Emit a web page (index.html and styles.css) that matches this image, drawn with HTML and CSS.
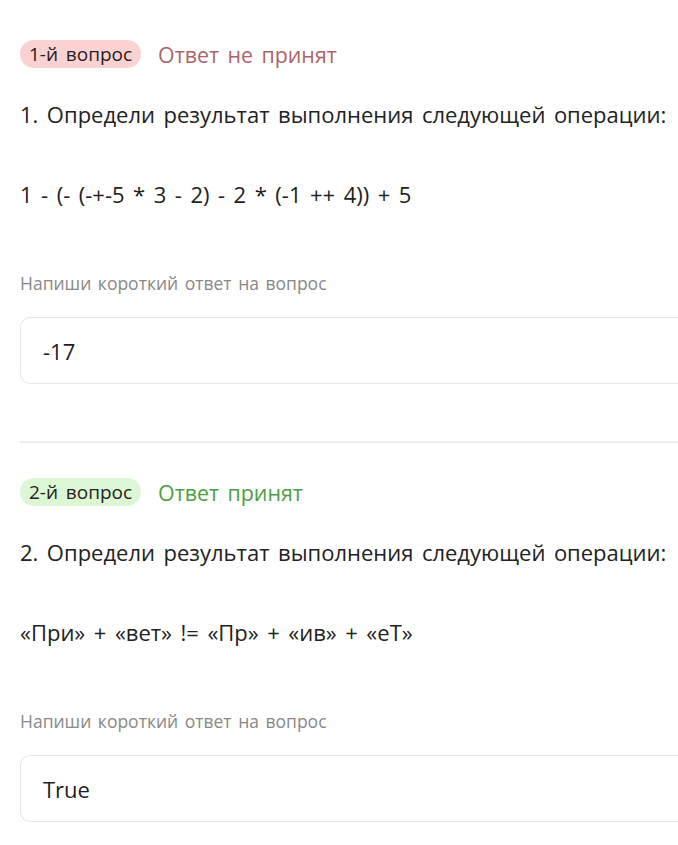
FILE: index.html
```html
<!DOCTYPE html>
<html lang="ru">
<head>
<meta charset="utf-8">
<link rel="stylesheet" href="styles.css">
</head>
<body>
<main class="page">
  <section class="question">
    <div class="q-head">
      <span class="badge badge-wrong">1-й вопрос</span>
      <span class="status status-wrong">Ответ не принят</span>
    </div>
    <p class="q-text">1. Определи результат выполнения следующей операции:</p>
    <p class="q-expr">1 - (- (-+-5 * 3 - 2) - 2 * (-1 ++ 4)) + 5</p>
    <p class="q-label">Напиши короткий ответ на вопрос</p>
    <div class="answer">-17</div>
  </section>
  <hr class="divider">
  <section class="question">
    <div class="q-head">
      <span class="badge badge-right">2-й вопрос</span>
      <span class="status status-right">Ответ принят</span>
    </div>
    <p class="q-text">2. Определи результат выполнения следующей операции:</p>
    <p class="q-expr">«При» + «вет» != «Пр» + «ив» + «еТ»</p>
    <p class="q-label">Напиши короткий ответ на вопрос</p>
    <div class="answer">True</div>
  </section>
</main>
</body>
</html>
```

FILE: styles.css
```css
html, body {
  margin: 0;
  padding: 0;
  background: #ffffff;
  overflow: hidden;
}
body {
  font-family: "Open Sans", "Noto Sans", sans-serif;
  color: #222222;
}
.page {
  padding: 40px 0 0 20px;
}
.question {
  display: flex;
  flex-direction: column;
}
.q-head {
  display: flex;
  align-items: center;
  gap: 17px;
  height: 28px;
}
.badge {
  display: inline-flex;
  align-items: center;
  height: 28px;
  padding: 0 9px;
  border-radius: 14px;
  font-size: 19px;
  word-spacing: 2.8px;
  color: #262020;
}
.badge-wrong { background: #fbd2d2; }
.badge-right { background: #dcf7d3; }
.status {
  font-size: 21.4px;
  word-spacing: 2.8px;
}
.status-wrong { color: #ad6468; }
.status-right { color: #4b9e44; }
.q-text, .q-expr {
  margin: 0;
  font-size: 22px;
  line-height: 30px;
  word-spacing: 2.8px;
  color: #222222;
}
.q-text { margin-top: 31px; }
.q-expr { margin-top: 50px; }
.q-label {
  margin: 63px 0 0;
  font-size: 17.5px;
  line-height: 22px;
  word-spacing: 2px;
  color: #888888;
}
.answer {
  margin-top: 23px;
  height: 65px;
  border: 1px solid #e6e6e6;
  border-right: 0;
  border-radius: 10px 0 0 10px;
  padding: 0 22px;
  display: flex;
  align-items: center;
  font-size: 22px;
  color: #1e1e1e;
}
.divider {
  margin: 57px 0 35px;
  border: 0;
  height: 2px;
  background: #ececec;
}
```
